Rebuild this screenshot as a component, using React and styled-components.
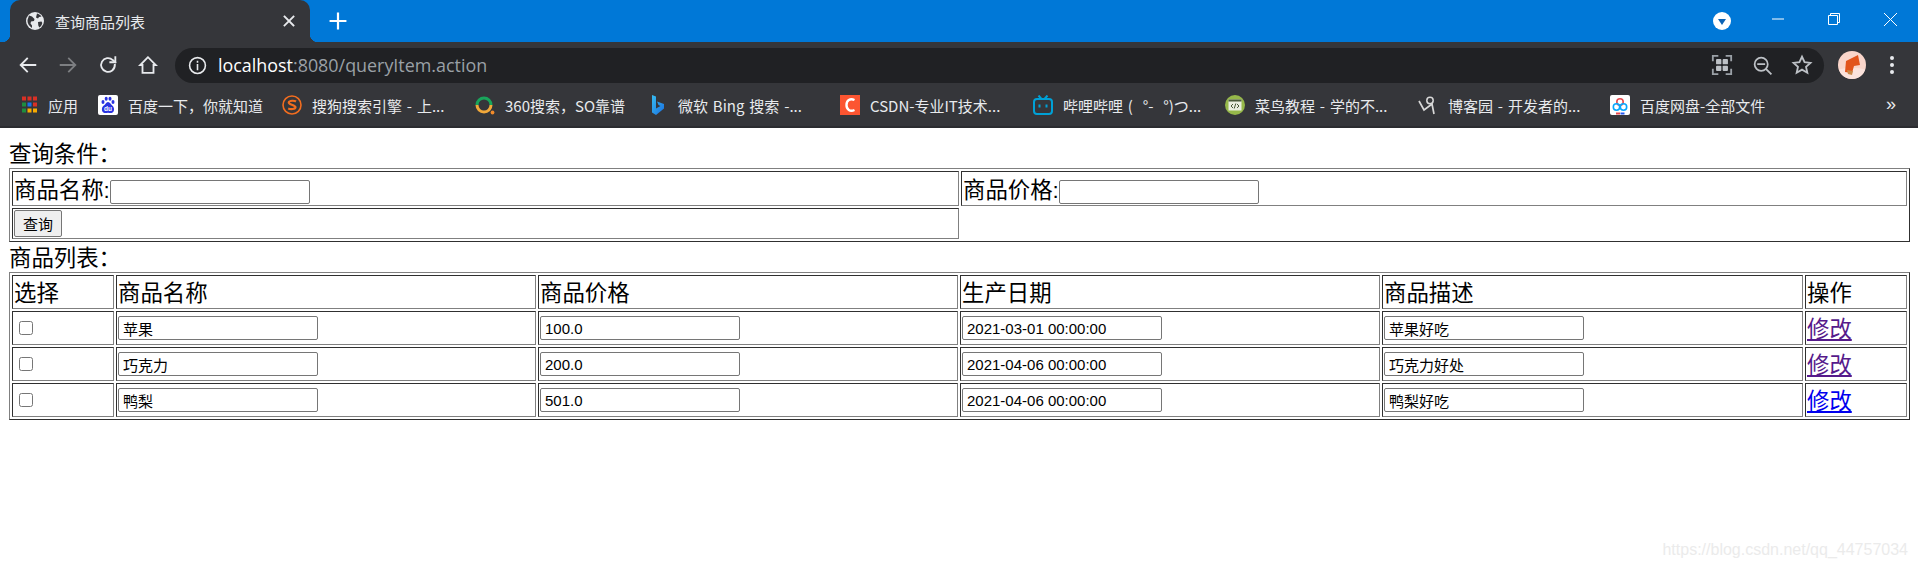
import React from "react";
import styled, { createGlobalStyle } from "styled-components";

const GlobalStyle = createGlobalStyle`
  html, body { margin: 0; padding: 0; background: #fff; }
  body { font-family: "Liberation Sans", "Noto Sans CJK SC", sans-serif; color: #000; }
`;

const Page = styled.div`
  position: relative;
  width: 1918px;
  height: 566px;
  overflow: hidden;
`;

/* ---------- browser chrome ---------- */
const TabStrip = styled.div`
  display: flex;
  align-items: center;
  height: 42px;
  padding-left: 10px;
  background: #0078d7;
`;
const Tab = styled.div`
  position: relative;
  display: flex;
  align-items: center;
  align-self: flex-end;
  width: 300px;
  height: 42px;
  box-sizing: border-box;
  padding: 0 12px 0 16px;
  background: #35363a;
  border-radius: 10px 10px 0 0;
  color: #e8eaed;
  &::before, &::after {
    content: "";
    position: absolute;
    bottom: 0;
    width: 8px;
    height: 8px;
  }
  &::before { left: -8px; background: radial-gradient(circle at 0 0, transparent 8px, #35363a 8.5px); }
  &::after { right: -8px; background: radial-gradient(circle at 100% 0, transparent 8px, #35363a 8.5px); }
`;
const TabTitle = styled.span`
  flex: 1;
  margin-left: 11px;
  font-size: 15px;
  font-family: "Noto Sans CJK SC", sans-serif;
`;
const NewTab = styled.div`
  display: flex;
  margin-left: 17px;
`;
const WindowControls = styled.div`
  display: flex;
  align-items: center;
  margin-left: auto;
`;
const WindowButton = styled.div`
  display: flex;
  align-items: center;
  justify-content: center;
  width: 56px;
  height: 42px;
  margin-top: -4px;
`;
const ExtensionDot = styled.div`
  display: flex;
  margin-right: 19px;
`;

const Toolbar = styled.div`
  display: flex;
  align-items: center;
  height: 46px;
  padding: 0 6px 0 8px;
  background: #35363a;
`;
const ToolButton = styled.div`
  display: flex;
  align-items: center;
  justify-content: center;
  flex: none;
  width: 40px;
  height: 35px;
`;
const Omnibox = styled.div`
  display: flex;
  align-items: center;
  flex: 1;
  height: 35px;
  margin: 0 8px 0 7px;
  padding: 0 2px 0 13px;
  background: #202124;
  border-radius: 18px;
`;
const Url = styled.div`
  margin-left: 11px;
  font-family: "Open Sans", sans-serif;
  font-size: 17.9px;
  color: #9aa0a6;
  b { font-weight: 400; color: #fff; }
`;
const OmniActions = styled.div`
  display: flex;
  margin-left: auto;
`;
const Avatar = styled.div`
  width: 28px;
  height: 28px;
  border-radius: 50%;
  overflow: hidden;
`;

const BookmarkBar = styled.div`
  display: flex;
  align-items: flex-start;
  height: 40px;
  box-sizing: border-box;
  padding: 7px 0 0 20px;
  background: #35363a;
  border-bottom: 2px solid #2b2c30;
`;
const Bookmark = styled.div`
  display: flex;
  align-items: center;
  flex: none;
  width: ${(p) => p.$w}px;
  height: 20px;
  color: #e8eaed;
  font-family: "Noto Sans CJK SC", sans-serif;
  font-size: 15px;
  word-spacing: 1.5px;
  white-space: pre;
  svg { flex: none; margin-right: 10px; }
`;
const MoreBookmarks = styled.div`
  margin-left: auto;
  margin-right: 22px;
  color: #e8eaed;
  font-size: 18px;
  line-height: 18px;
`;

/* ---------- the page itself ---------- */
const Content = styled.div`
  padding: 10px 8px 0 9px;
  font-size: 22.4px;
`;
const Title = styled.div`
  height: 30px;
  line-height: 33px;
`;
const Table = styled.table`
  width: 100%;
  table-layout: fixed;
  border-collapse: separate;
  border-spacing: 2px;
  border: 1px solid;
  border-color: #808080 #303030 #303030 #808080;
`;
const Cell = styled.td`
  box-sizing: border-box;
  height: ${(p) => p.$h || 34}px;
  padding: 1px;
  border: 1px solid;
  border-color: #303030 #808080 #808080 #303030;
  white-space: nowrap;
  overflow: hidden;
`;
const TextCell = styled(Cell)`
  padding: 3px 1px 0;
  line-height: 29px;
`;
const TextInput = styled.input.attrs({ type: "text", readOnly: true })`
  display: ${(p) => (p.$inline ? "inline-block" : "block")};
  box-sizing: border-box;
  width: 200px;
  height: 24px;
  padding: 1px 4px;
  border: 1px solid #767676;
  border-radius: 2px;
  font-family: "Liberation Sans", "Noto Sans CJK SC", sans-serif;
  font-size: 15px;
  background: #fff;
  color: #000;
`;
const QueryButton = styled.button`
  display: block;
  box-sizing: border-box;
  width: 48px;
  height: 27px;
  padding: 0;
  border: 1px solid #767676;
  border-radius: 2px;
  background: #efefef;
  font-family: "Noto Sans CJK SC", sans-serif;
  font-size: 15px;
  color: #000;
`;
const Check = styled.input.attrs({ type: "checkbox" })`
  display: block;
  width: 14px;
  height: 14px;
  margin: 0 0 0 5px;
`;
const EditLink = styled.a`
  color: ${(p) => (p.$visited ? "#551a8b" : "#0000ee")};
  text-decoration: underline;
`;
const Watermark = styled.div`
  position: absolute;
  right: 10px;
  bottom: 7px;
  font-family: "Liberation Sans", sans-serif;
  font-size: 16px;
  color: #ebebeb;
`;

/* ---------- icons ---------- */
const Stroke = ({ size = 20, color = "#e8eaed", width = 2, children }) => (
  <svg width={size} height={size} viewBox="0 0 24 24" fill="none" stroke={color} strokeWidth={width} strokeLinecap="square">
    {children}
  </svg>
);

const GlobeIcon = () => (
  <svg width="18" height="18" viewBox="0 0 18 18">
    <circle cx="9" cy="9" r="9" fill="#e8eaed" />
    <path d="M3 3.5l3 1 2.5 2.5-.5 2-3 .5-.5 2 1.5 2v2.5C3 14 1.2 11 1.5 8zM11 1.5c2 .5 3.5 1.5 4.5 3l-2.5.5-1 1.5-2-1zM12 10l3.5-.5.8 1.5c-.5 2-1.5 3.500-3 4.500l-1-2z" fill="#35363a" />
  </svg>
);

const AppsIcon = () => (
  <svg width="18" height="20" viewBox="0 0 18 20">
    {[
      ["#d93025", "#d93025", "#d93025"],
      ["#1e8e3e", "#1a73e8", "#d93025"],
      ["#1e8e3e", "#f9ab00", "#f9ab00"],
    ].map((row, r) =>
      row.map((c, i) => <rect key={`${r}${i}`} x={2 + i * 5.500} y={1.500 + r * 6} width="4" height="4" fill={c} />)
    )}
  </svg>
);

const BaiduIcon = () => (
  <svg width="20" height="20" viewBox="0 0 20 20">
    <rect width="20" height="20" rx="2" fill="#fff" />
    <g fill="#2932e1">
      <ellipse cx="5" cy="7" rx="1.500" ry="2" />
      <ellipse cx="8.200" cy="3.800" rx="1.500" ry="2" />
      <ellipse cx="12" cy="3.800" rx="1.500" ry="2" />
      <ellipse cx="15" cy="7" rx="1.500" ry="2" />
      <path d="M10 7c-2 0-2.500 2.500-4.500 3.800S3 17.500 6.500 18c1.500.2 2.500-.3 3.500-.3s2 .5 3.500.3c3.500-.5 3-5.800 1-7.200S12 7 10 7z" />
    </g>
    <text x="10" y="16" textAnchor="middle" fontFamily="Liberation Sans" fontSize="6.500" fontWeight="700" fill="#fff">du</text>
  </svg>
);

const SogouIcon = () => (
  <svg width="20" height="20" viewBox="0 0 20 20" fill="none">
    <circle cx="10" cy="10" r="9" stroke="#f26d1f" strokeWidth="1.600" />
    <path d="M14 6.500c-1.500-1-6.500-1.200-7.200.8-.8 2.500 6.700 2.200 6.700 5 0 2-5 2.200-7.300 1.200" stroke="#f26d1f" strokeWidth="2.200" />
  </svg>
);

const Q360Icon = () => (
  <svg width="20" height="20" viewBox="0 0 20 20" fill="none">
    <path d="M2 10a7 7 0 0 1 14 0" stroke="#19a55b" strokeWidth="3" />
    <path d="M16 10a7 7 0 0 1-14 0" stroke="#f2a93a" strokeWidth="3" />
    <circle cx="17.500" cy="17.500" r="1.900" fill="#f28b2a" />
  </svg>
);

const BingIcon = () => (
  <svg width="20" height="20" viewBox="0 0 20 20">
    <defs>
      <linearGradient id="bing" x1="0" y1="0" x2="1" y2="1">
        <stop offset="0" stopColor="#37bdf0" />
        <stop offset="1" stopColor="#1a6fe0" />
      </linearGradient>
    </defs>
    <path d="M4 0l4 1.500v12l4.500-2.500-2-1L9 6.500l7 2.500v4.500L8 20l-4-2.500z" fill="url(#bing)" />
  </svg>
);

const CsdnIcon = () => (
  <svg width="20" height="20" viewBox="0 0 20 20" fill="none">
    <rect width="20" height="20" fill="#fc5531" />
    <path d="M14.500 5C10 3 6.500 5.500 6.500 10s3.500 7 8 5" stroke="#fff" strokeWidth="2.400" />
  </svg>
);

const BiliIcon = () => (
  <svg width="20" height="20" viewBox="0 0 20 20" fill="none">
    <rect x="1" y="4" width="18" height="15" rx="3" stroke="#00a1d6" strokeWidth="2" />
    <path d="M5.500 0.500l3 3.500M14.500 0.500l-3 3.500" stroke="#00a1d6" strokeWidth="2" />
    <path d="M6.500 9.500v3M13.500 9.500v3" stroke="#00a1d6" strokeWidth="2" />
  </svg>
);

const RunoobIcon = () => (
  <svg width="20" height="20" viewBox="0 0 20 20">
    <circle cx="10" cy="10" r="10" fill="#96b84a" />
    <rect x="3.500" y="4.500" width="13" height="11" fill="#e9eee0" />
    <rect x="3.500" y="4.500" width="13" height="2" fill="#4a5a3a" />
    <path d="M8 9l-2 2 2 2M12 9l2 2-2 2M10.800 8.500l-1.600 5" stroke="#4a5a3a" strokeWidth="1" fill="none" />
  </svg>
);

const CnblogsIcon = () => (
  <svg width="20" height="20" viewBox="0 0 20 20" fill="none">
    <circle cx="12" cy="5.500" r="3.200" stroke="#d8d8d8" strokeWidth="1.500" />
    <path d="M1 6l5 9 8-6 2 10" stroke="#d8d8d8" strokeWidth="1.700" />
  </svg>
);

const NetdiskIcon = () => (
  <svg width="20" height="20" viewBox="0 0 20 20" fill="none">
    <rect width="20" height="20" rx="2" fill="#fff" />
    <circle cx="10" cy="7" r="3.200" stroke="#e5484d" strokeWidth="1.600" />
    <circle cx="6.500" cy="12" r="3.200" stroke="#06a7ff" strokeWidth="1.600" />
    <circle cx="13.500" cy="12" r="3.200" stroke="#06a7ff" strokeWidth="1.600" />
    <path d="M6 18.500h4" stroke="#e5484d" strokeWidth="2" />
    <path d="M10.500 18.500h4" stroke="#2558f0" strokeWidth="2" />
  </svg>
);

const bookmarks = [
  { w: 78, icon: <AppsIcon />, text: "应用" },
  { w: 184, icon: <BaiduIcon />, text: "百度一下，你就知道" },
  { w: 193, icon: <SogouIcon />, text: "搜狗搜索引擎 - 上..." },
  { w: 173, icon: <Q360Icon />, text: "360搜索，SO靠谱" },
  { w: 192, icon: <BingIcon />, text: "微软 Bing 搜索 -..." },
  { w: 193, icon: <CsdnIcon />, text: "CSDN-专业IT技术..." },
  { w: 192, icon: <BiliIcon />, text: "哔哩哔哩 (  °-  °)つ..." },
  { w: 193, icon: <RunoobIcon />, text: "菜鸟教程 - 学的不..." },
  { w: 192, icon: <CnblogsIcon />, text: "博客园 - 开发者的..." },
  { w: 160, icon: <NetdiskIcon />, text: "百度网盘-全部文件" },
];

const columns = [102, 420, 420, 420, 421, 102];
const headers = ["选择", "商品名称", "商品价格", "生产日期", "商品描述", "操作"];
const items = [
  { name: "苹果", price: "100.0", date: "2021-03-01 00:00:00", desc: "苹果好吃", visited: true },
  { name: "巧克力", price: "200.0", date: "2021-04-06 00:00:00", desc: "巧克力好处", visited: true },
  { name: "鸭梨", price: "501.0", date: "2021-04-06 00:00:00", desc: "鸭梨好吃", visited: false },
];

const App = () => {
  return (
    <Page>
      <GlobalStyle />
      <TabStrip>
        <Tab>
          <GlobeIcon />
          <TabTitle>查询商品列表</TabTitle>
          <Stroke size={18} width={2.400}><path d="M6 6l12 12M18 6L6 18" /></Stroke>
        </Tab>
        <NewTab>
          <Stroke size={22} color="#fff" width={2.400}><path d="M12 4v16M4 12h16" /></Stroke>
        </NewTab>
        <WindowControls>
          <ExtensionDot>
            <svg width="18" height="18" viewBox="0 0 18 18">
              <circle cx="9" cy="9" r="9" fill="#fff" />
              <path d="M5 7h8l-4 6z" fill="#0b63b5" />
            </svg>
          </ExtensionDot>
          <WindowButton>
            <svg width="14" height="14" viewBox="0 0 14 14"><path d="M1 7h12" stroke="#fff" /></svg>
          </WindowButton>
          <WindowButton>
            <svg width="14" height="14" viewBox="0 0 14 14" fill="none" stroke="#fff">
              <path d="M1.500 3.500h9v9h-9zM3.500 3.500v-2h9v9h-2" />
            </svg>
          </WindowButton>
          <WindowButton>
            <svg width="15" height="15" viewBox="0 0 15 15"><path d="M1 1l13 13M14 1L1 14" stroke="#fff" /></svg>
          </WindowButton>
        </WindowControls>
      </TabStrip>

      <Toolbar>
        <ToolButton>
          <Stroke size={22}><path d="M20 12H5M11 5l-7 7 7 7" /></Stroke>
        </ToolButton>
        <ToolButton>
          <Stroke size={22} color="#7d7f82"><path d="M4 12h15M13 5l7 7-7 7" /></Stroke>
        </ToolButton>
        <ToolButton>
          <Stroke size={22}>
            <path d="M19.500 12a7.500 7.500 0 1 1-2.300-5.400L20 9" />
            <path d="M20 3.500V9h-5.500" />
          </Stroke>
        </ToolButton>
        <ToolButton>
          <Stroke size={22}><path d="M12 3.500L3.500 12H6v8.500h12V12h2.500z" /></Stroke>
        </ToolButton>
        <Omnibox>
          <Stroke size={19} width={2}>
            <circle cx="12" cy="12" r="10" />
            <path d="M12 11v6M12 7v.5" />
          </Stroke>
          <Url><b>localhost</b>:8080/queryItem.action</Url>
          <OmniActions>
            <ToolButton>
              <Stroke size={22} color="#9aa0a6">
                <path d="M2 7V2h5M17 2h5v5M22 17v5h-5M7 22H2v-5" />
                <rect x="5.500" y="5.500" width="5.800" height="5.800" rx="1" fill="#bdc1c6" stroke="none" />
                <rect x="12.700" y="5.500" width="5.800" height="5.800" rx="1" fill="#bdc1c6" stroke="none" />
                <rect x="5.500" y="12.700" width="5.800" height="5.800" rx="1" fill="#bdc1c6" stroke="none" />
                <rect x="12.700" y="12.700" width="5.800" height="5.800" rx="1" fill="#bdc1c6" stroke="none" />
              </Stroke>
            </ToolButton>
            <ToolButton>
              <Stroke size={21} color="#bdc1c6">
                <circle cx="10.500" cy="10.500" r="7.500" />
                <path d="M7 10.500h7M16.500 16.500l5 5" />
              </Stroke>
            </ToolButton>
            <ToolButton>
              <Stroke size={22} color="#bdc1c6">
                <path d="M12 3l2.800 6 6.400.7-4.800 4.300 1.400 6.400L12 17.100l-5.800 3.300 1.400-6.400L2.800 9.700 9.200 9z" />
              </Stroke>
            </ToolButton>
          </OmniActions>
        </Omnibox>
        <ToolButton>
          <Avatar>
            <svg width="28" height="28" viewBox="0 0 28 28">
              <rect width="28" height="28" fill="#f9d5ca" />
              <path d="M0 19c8-3 20-3 28 0v9H0z" fill="#fbe3dc" />
              <path d="M20 4l-12 6-1 11 7 1 2-7 6-1z" fill="#e2541c" />
              <path d="M9 19l6 1-1 4-4-1z" fill="#c98a4a" />
            </svg>
          </Avatar>
        </ToolButton>
        <ToolButton>
          <svg width="6" height="20" viewBox="0 0 6 20" fill="#e8eaed">
            <circle cx="3" cy="3" r="2" />
            <circle cx="3" cy="10" r="2" />
            <circle cx="3" cy="17" r="2" />
          </svg>
        </ToolButton>
      </Toolbar>

      <BookmarkBar>
        {bookmarks.map((b) => (
          <Bookmark key={b.text} $w={b.w}>
            {b.icon}
            {b.text}
          </Bookmark>
        ))}
        <MoreBookmarks>»</MoreBookmarks>
      </BookmarkBar>

      <Content>
        <Title>查询条件：</Title>
        <Table>
          <colgroup>
            <col style={{ width: 947 }} />
            <col />
          </colgroup>
          <tbody>
            <tr>
              <TextCell $h={35}>商品名称:<TextInput $inline /></TextCell>
              <TextCell $h={35}>商品价格:<TextInput $inline /></TextCell>
            </tr>
            <tr>
              <Cell $h={31}><QueryButton>查询</QueryButton></Cell>
            </tr>
          </tbody>
        </Table>
        <Title>商品列表：</Title>
        <Table>
          <colgroup>
            {columns.map((c, i) => <col key={i} style={{ width: c }} />)}
          </colgroup>
          <tbody>
            <tr>
              {headers.map((h) => <TextCell key={h}>{h}</TextCell>)}
            </tr>
            {items.map((item) => (
              <tr key={item.name}>
                <Cell><Check /></Cell>
                <Cell><TextInput defaultValue={item.name} /></Cell>
                <Cell><TextInput defaultValue={item.price} /></Cell>
                <Cell><TextInput defaultValue={item.date} /></Cell>
                <Cell><TextInput defaultValue={item.desc} /></Cell>
                <TextCell><EditLink href="#" $visited={item.visited}>修改</EditLink></TextCell>
              </tr>
            ))}
          </tbody>
        </Table>
      </Content>
      <Watermark>https://blog.csdn.net/qq_44757034</Watermark>
    </Page>
  );
};

export default App;
